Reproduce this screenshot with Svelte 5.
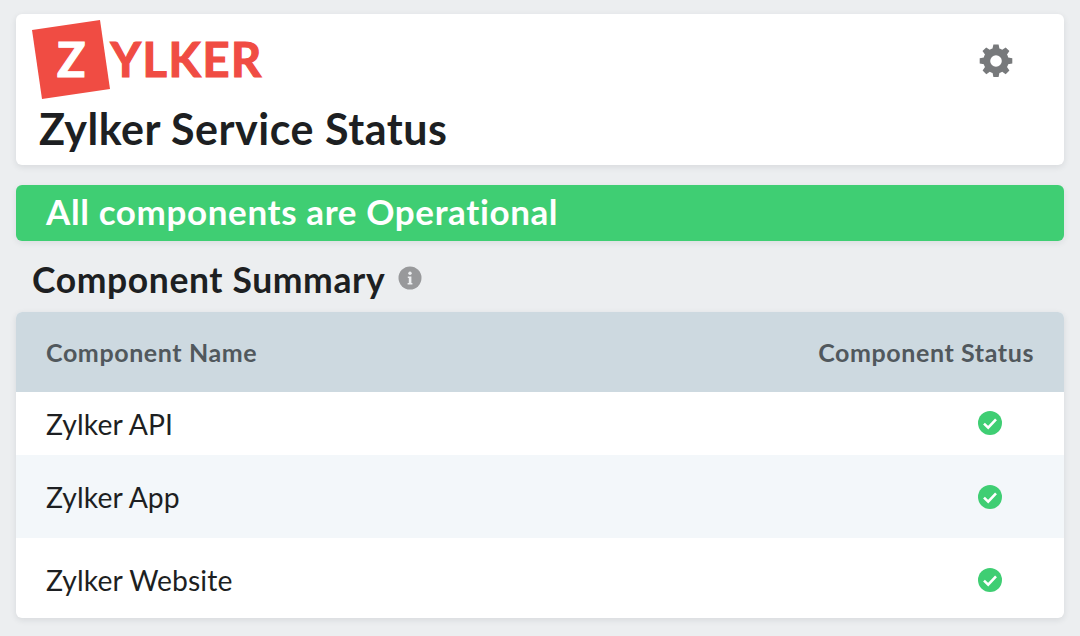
<script>
  const rows = [
    { name: 'Zylker API', cls: 'r1' },
    { name: 'Zylker App', cls: 'r2 alt' },
    { name: 'Zylker Website', cls: 'r3' }
  ];
</script>

<div class="page">
  <header class="card head">
    <div class="brand">
      <svg class="logo" width="240" height="86" viewBox="0 0 240 86" aria-label="Zylker logo">
        <polygon points="0,11 68,1 78,70 10,80" fill="#f04c43" />
        <text x="25" y="58" class="lz">Z</text>
        <text x="78.5" y="58" class="lt">YLKER</text>
      </svg>
      <h1>Zylker Service Status</h1>
    </div>
    <svg class="gear" width="36" height="36" viewBox="0 0 36 36" aria-label="Settings">
      <path fill="#77797b" fill-rule="evenodd" d="M15.4 1.5h5.2l.8 4.1c1 .3 1.9.7 2.8 1.2l3.5-2.4 3.7 3.7-2.4 3.5c.5.9.9 1.8 1.2 2.8l4.1.8v5.2l-4.1.8c-.3 1-.7 1.9-1.2 2.8l2.4 3.5-3.7 3.7-3.5-2.4c-.9.5-1.8.9-2.8 1.2l-.8 4.1h-5.2l-.8-4.1c-1-.3-1.9-.7-2.8-1.2l-3.5 2.4-3.7-3.7 2.4-3.5c-.5-.9-.9-1.8-1.2-2.8l-4.1-.8v-5.2l4.1-.8c.3-1 .7-1.9 1.2-2.8L4.5 8.1l3.7-3.7 3.5 2.4c.9-.5 1.8-.9 2.8-1.2zM18 12.2a5.8 5.8 0 1 0 0 11.6 5.8 5.8 0 0 0 0-11.6z" />
    </svg>
  </header>

  <div class="banner">All components are Operational</div>

  <h2>
    Component Summary
    <svg class="info" width="24" height="24" viewBox="0 0 24 24" aria-label="Info">
      <circle cx="12" cy="12" r="11.5" fill="#98999b" />
      <circle cx="12" cy="7.2" r="1.7" fill="#eceef0" />
      <path d="M9.8 10.4h3.6v6.6h1v1.6H9.6V17h1.2v-5H9.8z" fill="#eceef0" />
    </svg>
  </h2>

  <section class="card table">
    <div class="row thead">
      <span>Component Name</span>
      <span>Component Status</span>
    </div>
    {#each rows as row}
      <div class="row {row.cls}">
        <span>{row.name}</span>
        <svg class="ok" width="24" height="24" viewBox="0 0 24 24" aria-label="Operational">
          <circle cx="12" cy="12" r="12" fill="#3fce73" />
          <path d="M6 12.6l4.2 4L18 8.4" fill="none" stroke="#fff" stroke-width="2.6" />
        </svg>
      </div>
    {/each}
  </section>
</div>

<style>
  :global(body) {
    margin: 0;
    background: #eceef0;
  }
  .page {
    height: 636px;
    padding: 14px 16px 0;
    box-sizing: border-box;
    font-family: Lato, sans-serif;
    color: #1d1f22;
    overflow: hidden;
  }
  .card {
    background: #fff;
    border-radius: 6px;
    box-shadow: 0 2px 6px rgba(30, 40, 50, 0.1);
  }
  .head {
    height: 151px;
    display: flex;
    justify-content: space-between;
    align-items: flex-start;
    padding: 5px 50px 0 16px;
    box-sizing: border-box;
  }
  .brand {
    display: flex;
    flex-direction: column;
  }
  .logo {
    display: block;
  }
  .lz,
  .lt {
    font-family: Lato, sans-serif;
    font-weight: 700;
    font-size: 47px;
    stroke-width: 1.2px;
  }
  .lz {
    fill: #fff;
    stroke: #fff;
  }
  .lt {
    fill: #f04c43;
    stroke: #f04c43;
    letter-spacing: 1.6px;
  }
  h1 {
    margin: 1px 0 0 7px;
    font-size: 43px;
    line-height: 46px;
    font-weight: 700;
    letter-spacing: 0.5px;
    white-space: nowrap;
  }
  .gear {
    margin-top: 24px;
  }
  .banner {
    margin-top: 20px;
    height: 56px;
    background: #3fce73;
    border-radius: 6px;
    color: #fff;
    font-size: 35px;
    font-weight: 700;
    letter-spacing: 0.62px;
    line-height: 52px;
    padding-left: 30px;
    box-shadow: 0 2px 6px rgba(30, 40, 50, 0.08);
  }
  h2 {
    margin: 0;
    height: 71px;
    box-sizing: border-box;
    padding: 6px 0 0 16px;
    display: flex;
    align-items: center;
    gap: 13px;
    font-size: 35.5px;
    font-weight: 700;
    letter-spacing: 0.6px;
  }
  .info {
    margin-top: -3px;
  }
  .table {
    height: 306px;
    overflow: hidden;
  }
  .row {
    display: flex;
    justify-content: space-between;
    align-items: center;
    padding: 0 30px;
    font-size: 28.3px;
    letter-spacing: 0.1px;
    box-sizing: border-box;
  }
  .thead {
    height: 80px;
    background: #cdd9e0;
    color: #51585d;
    font-size: 25px;
    font-weight: 700;
    letter-spacing: 0.6px;
  }
  .r1 {
    height: 63px;
  }
  .r1 .ok {
    margin-top: -2px;
  }
  .r2 {
    height: 83px;
  }
  .r3 {
    height: 80px;
    padding-top: 4px;
  }
  .alt {
    background: #f3f7fa;
  }
  .ok {
    margin-right: 32px;
  }
</style>
